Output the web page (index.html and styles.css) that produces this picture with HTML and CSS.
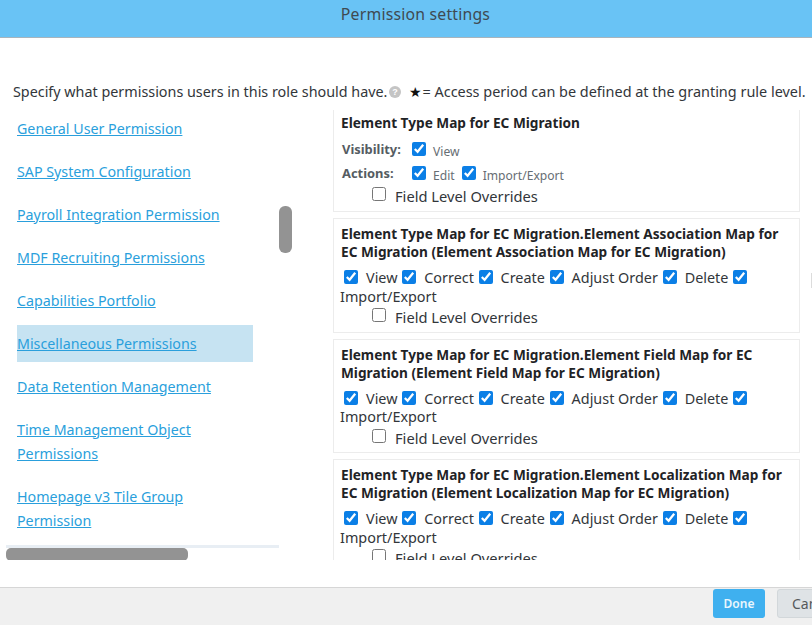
FILE: index.html
```
<!DOCTYPE html>
<html lang="en">
<head>
<meta charset="utf-8">
<title>Permission settings</title>
<link rel="stylesheet" href="styles.css">
</head>
<body>
<header class="head"><h1 class="head-title">Permission settings</h1></header>
<main class="main">
  <p class="intro">Specify what permissions users in this role should have.<svg class="help" viewBox="0 0 12 12" width="12" height="12"><circle cx="6" cy="6" r="6" fill="#c4c4c4"/><text x="6" y="9.2" font-size="9" text-anchor="middle" fill="#fff" font-family="Liberation Sans" font-weight="700">?</text></svg><span class="note"><span class="star">★</span>= Access period can be defined at the granting rule level.</span></p>
  <div class="cols">
    <nav class="side">
      <ul class="side-list">
        <li class="side-item"><a href="#">General User Permission</a></li>
        <li class="side-item"><a href="#">SAP System Configuration</a></li>
        <li class="side-item"><a href="#">Payroll Integration Permission</a></li>
        <li class="side-item"><a href="#">MDF Recruiting Permissions</a></li>
        <li class="side-item"><a href="#">Capabilities Portfolio</a></li>
        <li class="side-item active"><a href="#">Miscellaneous Permissions</a></li>
        <li class="side-item"><a href="#">Data Retention Management</a></li>
        <li class="side-item"><a href="#">Time Management Object Permissions</a></li>
        <li class="side-item"><a href="#">Homepage v3 Tile Group Permission</a></li>
      </ul>
      <div class="vthumb"></div>
      <div class="htrack"></div>
      <div class="hthumb"></div>
    </nav>
    <section class="panel">
      <article class="card card-first">
        <h2 class="card-title">Element Type Map for EC Migration</h2>
        <div class="meta-row"><span class="meta-label">Visibility:</span><input type="checkbox" checked><span class="meta-text">View</span></div>
        <div class="meta-row"><span class="meta-label">Actions:</span><input type="checkbox" checked><span class="meta-text">Edit</span><input type="checkbox" checked><span class="meta-text">Import/Export</span></div>
        <div class="field"><input type="checkbox">Field Level Overrides</div>
      </article>
      <article class="card">
        <h2 class="card-title">Element Type Map for EC Migration.Element Association Map for EC Migration (Element Association Map for EC Migration)</h2>
        <div class="perms"><input type="checkbox" checked>View <input type="checkbox" checked>Correct <input type="checkbox" checked>Create <input type="checkbox" checked>Adjust Order <input type="checkbox" checked>Delete <input type="checkbox" checked> Import/Export</div>
        <div class="field"><input type="checkbox">Field Level Overrides</div>
      </article>
      <article class="card">
        <h2 class="card-title">Element Type Map for EC Migration.Element Field Map for EC Migration (Element Field Map for EC Migration)</h2>
        <div class="perms"><input type="checkbox" checked>View <input type="checkbox" checked>Correct <input type="checkbox" checked>Create <input type="checkbox" checked>Adjust Order <input type="checkbox" checked>Delete <input type="checkbox" checked> Import/Export</div>
        <div class="field"><input type="checkbox">Field Level Overrides</div>
      </article>
      <article class="card">
        <h2 class="card-title">Element Type Map for EC Migration.Element Localization Map for EC Migration (Element Localization Map for EC Migration)</h2>
        <div class="perms"><input type="checkbox" checked>View <input type="checkbox" checked>Correct <input type="checkbox" checked>Create <input type="checkbox" checked>Adjust Order <input type="checkbox" checked>Delete <input type="checkbox" checked> Import/Export</div>
        <div class="field"><input type="checkbox">Field Level Overrides</div>
      </article>
    </section>
    <div class="edge"></div>
  </div>
</main>
<footer class="foot">
  <button class="btn btn-done" type="button">Done</button>
  <button class="btn btn-cancel" type="button">Cancel</button>
</footer>
</body>
</html>
```
FILE: styles.css
```
* { box-sizing: border-box; }
html, body { margin: 0; height: 100%; }
body {
  display: flex;
  flex-direction: column;
  height: 625px;
  overflow: hidden;
  background: #fff;
  color: #32363a;
  font-family: "Noto Sans", "Open Sans", sans-serif;
  font-size: 14px;
}
.head {
  flex: 0 0 38px;
  background: #69c3f5;
  border-bottom: 1px solid #a8b4bc;
  display: flex;
  align-items: center;
  justify-content: center;
  padding: 0 0 10px 19px;
}
.head-title { margin: 0; font-size: 15.8px; font-weight: 400; color: #3f4a52; letter-spacing: .2px; }
.main { flex: 1; min-height: 0; display: flex; flex-direction: column; padding-bottom: 27px; }
.intro {
  margin: 0;
  padding: 43px 0 0 13px;
  height: 72px;
  line-height: 22px;
  font-size: 14.35px;
  color: #32363a;
  white-space: nowrap;
}
.help { vertical-align: -1px; margin-left: 2px; }
.note { margin-left: 8px; font-size: 14.45px; }
.star { color: #111; }
.cols { flex: 1; min-height: 0; display: flex; position: relative; }
.side { flex: 0 0 333px; position: relative; overflow: hidden; padding-left: 17px; }
.side-list { list-style: none; margin: 0; padding: 0; width: 236px; display: flex; flex-direction: column; gap: 6px; }
.side-item { padding: 6.5px 0; line-height: 24px; font-size: 14.25px; }
.side-item a { color: #2a9fdc; text-decoration: underline; }
.side-item.active { background: #c6e3f2; }
.vthumb { position: absolute; left: 279px; top: 96px; width: 13px; height: 47px; border-radius: 6px; background: #939393; }
.htrack { position: absolute; left: 6px; top: 435px; width: 273px; height: 3px; background: #e8eef4; }
.hthumb { position: absolute; left: 6px; top: 438px; width: 182px; height: 13px; border-radius: 5px; background: #939393; }
.edge { position: absolute; left: 811px; top: 163px; width: 1px; height: 15px; background: #dcdcdc; }
.panel { flex: 1; min-width: 0; overflow: hidden; padding-right: 12px; display: flex; flex-direction: column; gap: 6px; }
.card { flex: none; border: 1px solid #ececec; padding: 6px 7px 4.5px; }
.card-first { height: 102px; border-top: 0; padding-top: 4px; }
.card-title { margin: 0; font-size: 13.65px; line-height: 18px; font-weight: 700; color: #1f2326; }
.card-first .card-title { margin-bottom: 5px; }
.meta-row { display: flex; align-items: center; height: 24px; font-size: 12.9px; }
.meta-row input { margin: 0 7px 0 0; }
.meta-row input ~ input { margin-left: 7px; }
.meta-label { width: 71px; font-weight: 700; color: #555c62; padding-left: 1px; }
.meta-text { font-size: 12.1px; color: #666d73; padding-top: 5px; }
.perms { margin: 8px 0 0 -1px; line-height: 18.5px; font-size: 14.4px; }
.perms input { margin: 0 8px 0 1px; vertical-align: -1px; }
.perms input:first-child { margin-left: 4px; }
.field { margin-top: 1px; padding-left: 31px; line-height: 20px; font-size: 14.7px; }
.field input { margin: 0 9px 0 0; vertical-align: 1px; }
input[type="checkbox"] { width: 14px; height: 14px; accent-color: #0b7fe6; }
.foot {
  flex: 0 0 38px;
  background: #f0f0f0;
  border-top: 1px solid #d6d6d6;
  display: flex;
  gap: 12px;
  justify-content: flex-end;
  padding-top: 1px;
  overflow: hidden;
}
.btn { height: 29px; border-radius: 3px; border: 1px solid transparent; font-family: inherit; font-size: 12px; padding: 0; }
.btn-done { width: 52px; background: #3fb0ef; color: #eaf6fd; font-weight: 600; }
.btn-cancel { width: 65px; margin-right: -30px; background: #dfe3e6; border-color: #d2d7da; color: #55595c; font-size: 14px; text-align: left; padding-left: 14px; }
```
